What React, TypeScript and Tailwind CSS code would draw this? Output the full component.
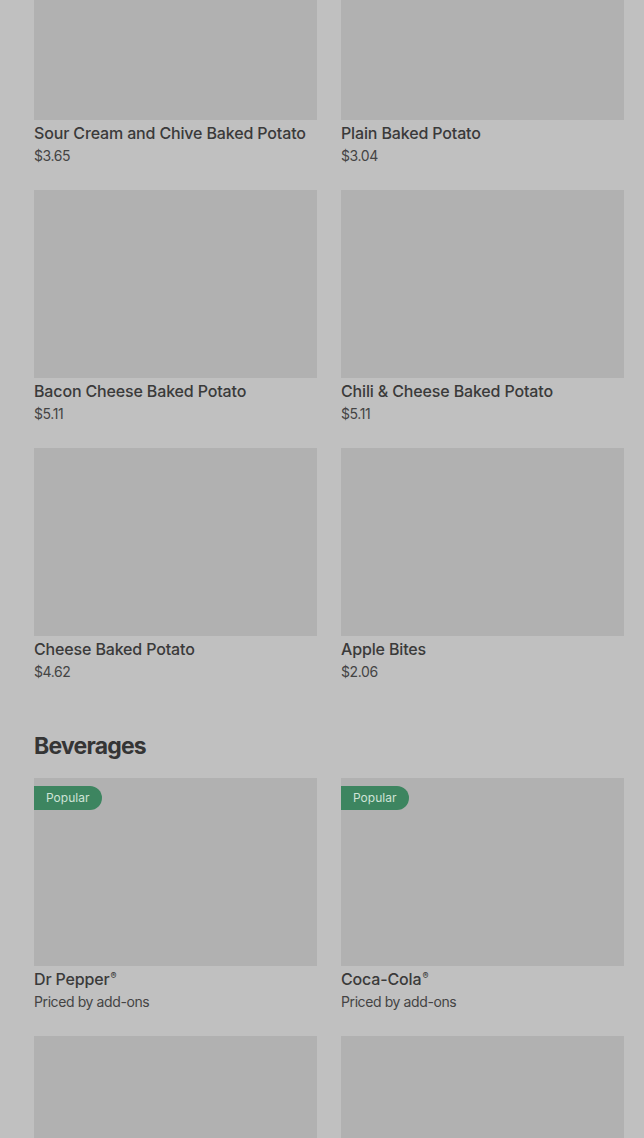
import React from "react";

type Item = { name: string; price: string; popular?: boolean; reg?: boolean };

const rows1: Item[][] = [
  [
    { name: "Sour Cream and Chive Baked Potato", price: "$3.65" },
    { name: "Plain Baked Potato", price: "$3.04" },
  ],
  [
    { name: "Bacon Cheese Baked Potato", price: "$5.11" },
    { name: "Chili & Cheese Baked Potato", price: "$5.11" },
  ],
  [
    { name: "Cheese Baked Potato", price: "$4.62" },
    { name: "Apple Bites", price: "$2.06" },
  ],
];

const rows2: Item[][] = [
  [
    { name: "Dr Pepper", price: "Priced by add-ons", popular: true, reg: true },
    { name: "Coca-Cola", price: "Priced by add-ons", popular: true, reg: true },
  ],
  [
    { name: "", price: "" },
    { name: "", price: "" },
  ],
];

function Card({ item }: { item: Item }) {
  return (
    <div className="flex flex-col">
      <div className="relative h-[188px] bg-[#b1b1b1]">
        {item.popular && (
          <div className="absolute left-0 top-[8px] flex h-[24px] items-center rounded-r-full bg-[#3d8560] pl-[12px] pr-[13px] text-[12px] text-[#cfe3d7]">
            Popular
          </div>
        )}
      </div>
      <div className="mt-[1px] h-[24px] text-[16px] leading-[24px] font-medium tracking-[-0.15px] text-[#3a3a3a] whitespace-nowrap">
        {item.name}
        {item.reg && <span className="relative -top-[6px] ml-[1px] text-[9px] leading-none">®</span>}
      </div>
      <div className="mt-[1px] text-[14px] leading-[20px] tracking-[-0.4px] text-[#444]">{item.price}</div>
    </div>
  );
}

export default function App() {
  return (
    <div
      className="h-[1138px] w-[644px] overflow-hidden bg-[#c0c0c0]"
      style={{ fontFamily: "Inter, 'Noto Sans', sans-serif" }}
    >
      <div className="-mt-[68px] pl-[34px] pr-[20px]">
        <div className="flex flex-col gap-[24px]">
          {rows1.map((r, i) => (
            <div key={i} className="grid grid-cols-2 gap-x-[24px]">
              {r.map((it, j) => (
                <Card key={j} item={it} />
              ))}
            </div>
          ))}
        </div>
        <h2 className="mt-[50px] text-[23px] leading-[28px] font-bold tracking-[-0.8px] text-[#353535]">
          Beverages
        </h2>
        <div className="mt-[18px] flex flex-col gap-[24px]">
          {rows2.map((r, i) => (
            <div key={i} className="grid grid-cols-2 gap-x-[24px]">
              {r.map((it, j) => (
                <Card key={j} item={it} />
              ))}
            </div>
          ))}
        </div>
      </div>
    </div>
  );
}
